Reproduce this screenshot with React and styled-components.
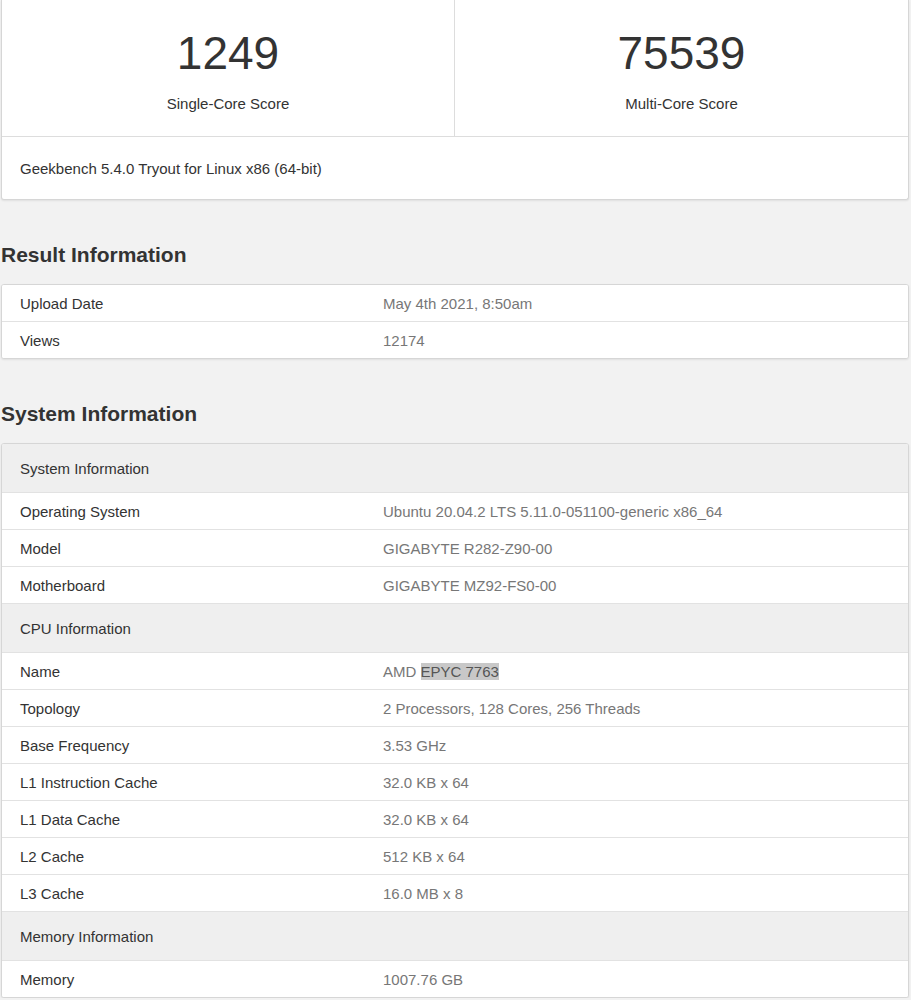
import React from "react";
import styled, { createGlobalStyle } from "styled-components";

const Global = createGlobalStyle`
  body { margin:0; background:#f2f2f2; font-family:"Liberation Sans", Arial, sans-serif; color:#333; }
`;
const Page = styled.div`padding:0 2px 0 1px;`;
const Card = styled.div`
  background:#fff; border:1px solid #d6d6d6; border-radius:3px; overflow:hidden;
  box-shadow:0 1px 2px rgba(0,0,0,0.08);
`;
const TopCard = styled(Card)`border-top:none; border-radius:0 0 3px 3px;`;
const Scores = styled.div`display:grid; grid-template-columns:1fr 1fr; border-bottom:1px solid #ddd;`;
const Score = styled.div`
  height:136px; display:flex; flex-direction:column; align-items:center;
  ${p => p.$divider && "border-right:1px solid #ddd;"}
`;
const Num = styled.div`font-size:46px; line-height:1; margin-top:30px; color:#333;`;
const Label = styled.div`font-size:15px; margin-top:19px; color:#333;`;
const Footer = styled.div`height:62px; display:flex; align-items:center; padding-left:18px; font-size:15px;`;
const H2 = styled.h2`font-size:21px; font-weight:bold; margin:0; padding:${p => p.$pt}px 0 17px 0; line-height:24px; color:#333;`;
const Row = styled.div`
  display:grid; grid-template-columns:363px 1fr; align-items:center;
  height:${p => (p.$head ? 48 : 36)}px; padding-left:18px;
  background:${p => (p.$head ? "#efefef" : "#fff")};
  font-size:15px;
  & + & { border-top:1px solid #e2e2e2; }
`;
const Val = styled.div`color:#777;`;
const Mark = styled.span`background:#c8c8c8; color:#555;`;

const Table = ({ rows }) => (
  <Card>
    {rows.map((r, i) =>
      r.head ? <Row key={i} $head>{r.head}</Row> :
      <Row key={i}><div>{r[0]}</div><Val>{r[1]}</Val></Row>
    )}
  </Card>
);

export default function App() {
  return (
    <Page>
      <Global />
      <TopCard>
        <Scores>
          <Score $divider><Num>1249</Num><Label>Single-Core Score</Label></Score>
          <Score><Num>75539</Num><Label>Multi-Core Score</Label></Score>
        </Scores>
        <Footer>Geekbench 5.4.0 Tryout for Linux x86 (64-bit)</Footer>
      </TopCard>
      <H2 $pt={43}>Result Information</H2>
      <Table rows={[["Upload Date", "May 4th 2021, 8:50am"], ["Views", "12174"]]} />
      <H2 $pt={43}>System Information</H2>
      <Table rows={[
        { head: "System Information" },
        ["Operating System", "Ubuntu 20.04.2 LTS 5.11.0-051100-generic x86_64"],
        ["Model", "GIGABYTE R282-Z90-00"],
        ["Motherboard", "GIGABYTE MZ92-FS0-00"],
        { head: "CPU Information" },
        ["Name", <>AMD <Mark>EPYC 7763</Mark></>],
        ["Topology", "2 Processors, 128 Cores, 256 Threads"],
        ["Base Frequency", "3.53 GHz"],
        ["L1 Instruction Cache", "32.0 KB x 64"],
        ["L1 Data Cache", "32.0 KB x 64"],
        ["L2 Cache", "512 KB x 64"],
        ["L3 Cache", "16.0 MB x 8"],
        { head: "Memory Information" },
        ["Memory", "1007.76 GB"],
      ]} />
    </Page>
  );
}
